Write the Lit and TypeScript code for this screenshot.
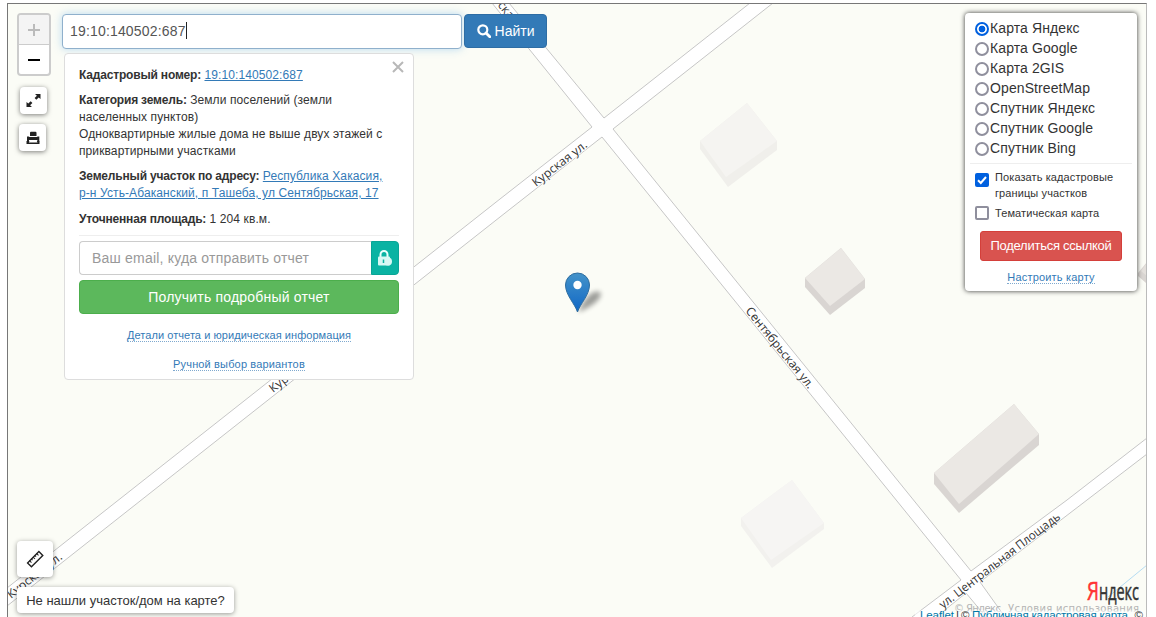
import { LitElement, html, svg, css } from "lit";
import { customElement, state } from "lit/decorators.js";

const LAYERS = [
  "Карта Яндекс",
  "Карта Google",
  "Карта 2GIS",
  "OpenStreetMap",
  "Спутник Яндекс",
  "Спутник Google",
  "Спутник Bing",
];

interface Building {
  outline: string;
  roof: string;
  wall: string;
  top: string;
}

const BUILDINGS: Building[] = [
  { outline: "700,141 747,103 777,141 777,150 728,187 700,149", roof: "700,141 747,103 777,141 726,177", wall: "#f0efeb", top: "#f5f4f1" },
  { outline: "805,278 841,248 865,279 865,288 830,315 805,287", roof: "805,278 841,248 865,279 830,306", wall: "#d9d5d2", top: "#ebe8e4" },
  { outline: "934,473 1014,404 1039,434 1039,445 959,513 934,484", roof: "934,473 1014,404 1039,434 959,504", wall: "#d9d5d2", top: "#ebe8e4" },
  { outline: "741,518 792,480 824,523 824,529 772,568 741,526", roof: "741,518 792,480 824,523 771,560", wall: "#f2f1ee", top: "#f6f5f3" },
  { outline: "1138,273 1147,262 1147,284 1138,276", roof: "1141,271 1147,263 1147,276", wall: "#d9d5d2", top: "#e4e0dc" },
];

@customElement("map-canvas")
export class MapCanvas extends LitElement {
  static styles = css`
    :host { display: block; }
    svg { display: block; }
    .edge { fill: none; stroke: #c6c6c6; stroke-width: 1; }
    .road { fill: #fff; }
    .street {
      font-family: "Open Sans", "Noto Sans", sans-serif;
      font-size: 12px;
      fill: #333;
      stroke: #fff;
      stroke-width: 2px;
      stroke-opacity: 0.7;
      paint-order: stroke;
    }
    .logo { font-family: "Open Sans", sans-serif; font-size: 23px; fill: #333; stroke: #333; stroke-width: 0.5px; }
    .logo-first { font-family: "Open Sans", sans-serif; font-size: 25px; fill: #f33; stroke: #f33; stroke-width: 0.5px; }
    .terms { font-family: "DejaVu Sans", sans-serif; font-size: 10px; fill: #b4b4b4; }
    .credit { font-family: "Liberation Sans", sans-serif; font-size: 11.5px; fill: #333; }
    .credit-link { fill: #0078a8; }
  `;

  private street(x: number, y: number, angle: number, length: number, text: string) {
    return svg`<text class="street" transform=${`translate(${x} ${y}) rotate(${angle})`}
      textLength=${length} lengthAdjust="spacingAndGlyphs">${text}</text>`;
  }

  render() {
    return html`
      <svg width="1138" height="613" viewBox="8 4 1138 613">
        <defs>
          <linearGradient id="pin" x1="0" y1="0" x2="0" y2="1">
            <stop offset="0" stop-color="#4493c9"></stop>
            <stop offset="1" stop-color="#1067c6"></stop>
          </linearGradient>
          <filter id="soft" x="-50%" y="-50%" width="200%" height="200%">
            <feGaussianBlur stdDeviation="2.5"></feGaussianBlur>
          </filter>
        </defs>
        <path class="road" d="M492 3 592 127 500 199 7 588V606L500 217 602 137 961 580 912 617H936L966 593 986 617H1005L980 582 1087 500 1147 454V438L1067 500 971 571 613 129 688 70 773 3H750L665 70 604 118 509 3Z"></path>
        <path class="edge" d="M492 3 592 127 500 199 7 588M7 606 500 217 602 137 961 580 912 617M936 617 966 593 986 617M1005 617 980 582 1087 500 1147 454M1147 438 1067 500 971 571 613 129 688 70 773 3M750 3 665 70 604 118 509 3"></path>
        <path d="M1108 597 1147 565" stroke="#b5dcf2" fill="none"></path>
        ${BUILDINGS.map(
          (b) => svg`<polygon points=${b.outline} fill=${b.wall}></polygon><polygon points=${b.roof} fill=${b.top}></polygon>`
        )}
        ${this.street(536, 187, -38, 66, "Курская ул.")}
        ${this.street(273, 393, -38, 66, "Курская ул.")}
        ${this.street(11, 599, -38, 66, "Курская ул.")}
        ${this.street(484, -11, 51, 66, "Курская ул.")}
        ${this.street(745, 311, 51, 101, "Сентябрьская ул.")}
        ${this.street(943, 609, -37.5, 149, "ул. Центральная Площадь")}
        <path d="M578 312C584 299 592 289 600 292C604 297 592 307 578 312Z" fill="#000" opacity=".38" filter="url(#soft)"></path>
        <path d="M577.5 312C575 304 565.5 295 565.5 285A12 12 0 0 1 589.500 285C589.500 295 580 304 577.500 312Z" fill="url(#pin)" stroke="#2e6d9f" stroke-width="1"></path>
        <circle cx="577.500" cy="285" r="4.200" fill="#fff"></circle>
        <text class="logo-first" x="1087" y="600" textLength="12" lengthAdjust="spacingAndGlyphs">Я</text>
        <text class="logo" x="1099" y="600" textLength="40" lengthAdjust="spacingAndGlyphs">ндекс</text>
        <text class="terms" x="954" y="612" textLength="47">© Яндекс</text>
        <text class="terms" x="1008" y="612" textLength="131">Условия использования</text>
        <rect x="915" y="610.500" width="231" height="7" fill="#fff" opacity=".6"></rect>
        <text class="credit credit-link" x="920" y="619" textLength="34">Leaflet</text>
        <text class="credit" x="956" y="619">|</text>
        <text class="credit" x="961" y="619">©</text>
        <text class="credit credit-link" x="972" y="619" textLength="156">Публичная кадастровая карта</text>
        <text class="credit" x="1128" y="619">, ©</text>
      </svg>
    `;
  }
}

@customElement("parcel-card")
export class ParcelCard extends LitElement {
  static styles = css`
    :host {
      display: block;
      box-sizing: border-box;
      width: 350px;
      height: 327px;
      padding: 13px 14px 0;
      background: #fff;
      border: 1px solid #ddd;
      border-radius: 4px;
      font: 12px/17px "Liberation Sans", Arial, sans-serif;
      letter-spacing: 0.1px;
      color: #333;
      position: relative;
    }
    .row { margin: 0 0 8px; white-space: nowrap; }
    .area { margin: 9px 0 7px; }
    b { letter-spacing: -0.18px; }
    a { color: #337ab7; text-decoration: underline; }
    .close { position: absolute; right: 9px; top: 7px; }
    .divider { height: 1px; background: #eee; margin-bottom: 5px; }
    .field { display: flex; height: 34px; box-sizing: border-box; }
    .email {
      flex: 1;
      border: 1px solid #ccc;
      border-right: 0;
      border-radius: 4px 0 0 4px;
      padding: 0 12px;
      font-size: 14px;
      line-height: 32px;
      letter-spacing: 0.2px;
      color: #999;
    }
    .lock {
      width: 28px;
      background: #0ab3a3;
      border-radius: 0 4px 4px 0;
      display: flex;
      align-items: center;
      justify-content: center;
      box-sizing: border-box;
      border: 1px solid #0aa596;
    }
    .submit {
      display: block;
      width: 100%;
      height: 34px;
      margin-top: 5px;
      background: #5cb85c;
      border: 1px solid #4cae4c;
      border-radius: 4px;
      color: #fff;
      font: 14px/20px "Liberation Sans", Arial, sans-serif;
      letter-spacing: 0.2px;
      padding: 0;
    }
    .more { text-align: center; font-size: 11px; line-height: 13px; margin-top: 16px; letter-spacing: 0.06px; }
    .more.first { margin-top: 15px; }
    .more.last { letter-spacing: 0.15px; }
    .dotted { text-decoration: none; border-bottom: 1px dotted #7fa9cf; }
  `;

  render() {
    return html`
      <svg class="close" width="12" height="12" viewBox="0 0 12 12">
        <path d="M1 1 11 11M11 1 1 11" stroke="#b8b8b8" stroke-width="2"></path>
      </svg>
      <div class="row"><b>Кадастровый номер:</b> <a>19:10:140502:687</a></div>
      <div class="row">
        <b>Категория земель:</b> Земли поселений (земли<br />населенных пунктов)<br />Одноквартирные жилые дома не выше двух этажей
        с<br />приквартирными участками
      </div>
      <div class="row">
        <b>Земельный участок по адресу:</b> <a>Республика Хакасия,<br />р-н Усть-Абаканский, п Ташеба, ул Сентябрьская, 17</a>
      </div>
      <div class="row area"><b>Уточненная площадь:</b> 1 204 кв.м.</div>
      <div class="divider"></div>
      <div class="field">
        <div class="email">Ваш email, куда отправить отчет</div>
        <div class="lock">
          <svg width="16" height="18" viewBox="0 0 16 18">
            <path d="M3.500 8V5.500a3.500 3.500 0 0 1 7 0V8" fill="none" stroke="#eafffc" stroke-width="2"></path>
            <rect x="1" y="7.500" width="12" height="9" rx="1" fill="#d8f8f4"></rect>
            <circle cx="11" cy="12.500" r="4" fill="#d8f8f4"></circle>
            <path d="M6.500 10.500v3.500" stroke="#0ab3a3" stroke-width="1.500"></path>
          </svg>
        </div>
      </div>
      <button class="submit">Получить подробный отчет</button>
      <div class="more first"><a class="dotted">Детали отчета и юридическая информация</a></div>
      <div class="more last"><a class="dotted">Ручной выбор вариантов</a></div>
    `;
  }
}

@customElement("layer-panel")
export class LayerPanel extends LitElement {
  @state() private selected = 0;

  static styles = css`
    :host {
      display: block;
      box-sizing: border-box;
      width: 172px;
      height: 278px;
      padding: 5px 5px 0;
      background: #fff;
      border-radius: 4px;
      box-shadow: 0 0 5px rgba(0, 0, 0, 0.8);
      font: 14px/20px "Liberation Sans", Arial, sans-serif;
      letter-spacing: 0.1px;
      color: #333;
    }
    .option { display: flex; align-items: center; height: 20px; padding-left: 5px; gap: 1px; white-space: nowrap; }
    .radio {
      box-sizing: border-box;
      width: 14px;
      height: 14px;
      border: 2px solid #8f8f9d;
      border-radius: 50%;
      margin-top: 2px;
    }
    .radio.on { border-color: #0060df; background: radial-gradient(circle, #0060df 3px, #fff 3.700px); }
    .divider { height: 1px; background: #eee; margin: 5px 0; }
    .check { display: flex; align-items: flex-start; gap: 6px; padding-left: 5px; font-size: 11px; line-height: 16px; white-space: nowrap; }
    .box {
      box-sizing: border-box;
      width: 14px;
      height: 14px;
      border: 2px solid #8f8f9d;
      border-radius: 2px;
      flex: none;
      margin-top: 1px;
    }
    .box.on { border: 0; background: #0060df; margin-top: 4px; }
    .box svg { display: block; }
    .check + .check { margin-top: 4px; }
    .share {
      display: block;
      width: 142px;
      height: 30px;
      margin: 10px auto;
      border: 1px solid #d43f3a;
      border-radius: 3px;
      background: #d9534f;
      color: #fff;
      font: 13px/20px "Liberation Sans", Arial, sans-serif;
      letter-spacing: -0.25px;
      padding: 0;
    }
    .setup { text-align: center; font-size: 11px; line-height: 13px; letter-spacing: 0.2px; }
    .setup a { color: #337ab7; border-bottom: 1px dotted #7fa9cf; }
  `;

  render() {
    return html`
      ${LAYERS.map(
        (name, i) => html`<div class="option" @click=${() => (this.selected = i)}>
          <span class=${i === this.selected ? "radio on" : "radio"}></span><span>${name}</span>
        </div>`
      )}
      <div class="divider"></div>
      <div class="check">
        <span class="box on"
          ><svg width="14" height="14" viewBox="0 0 14 14">
            <path d="M3 7.300 5.800 10 11 4" fill="none" stroke="#fff" stroke-width="2"></path></svg
        ></span>
        <span>Показать кадастровые<br />границы участков</span>
      </div>
      <div class="check"><span class="box"></span><span>Тематическая карта</span></div>
      <button class="share">Поделиться ссылкой</button>
      <div class="setup"><a>Настроить карту</a></div>
    `;
  }
}

@customElement("app-root")
export class AppRoot extends LitElement {
  static styles = css`
    :host {
      display: block;
      box-sizing: border-box;
      width: 1156px;
      height: 617px;
      padding: 3px 9px 0 7px;
      background: #fff;
      overflow: hidden;
      font-family: "Liberation Sans", Arial, sans-serif;
      color: #333;
    }
    .map {
      box-sizing: border-box;
      position: relative;
      height: 614px;
      border: 1px solid #777;
      border-right-color: #bbb;
      border-bottom: 0;
      background: #fbfcf6;
      overflow: hidden;
    }
    .tools { position: absolute; left: 9px; top: 9px; display: flex; flex-direction: column; align-items: flex-start; }
    .zoom { width: 30px; border: 2px solid #ccc; border-radius: 4px; background: #fff; overflow: hidden; }
    .zoom-in, .zoom-out { height: 29px; display: flex; align-items: center; justify-content: center; }
    .zoom-in { background: #f4f4f4; border-bottom: 1px solid #ccc; }
    .tool {
      display: flex;
      align-items: center;
      justify-content: center;
      width: 27px;
      height: 27px;
      border-radius: 4px;
      background: #fff;
      box-shadow: 0 1px 5px rgba(0, 0, 0, 0.5);
    }
    .full { margin: 11px 0 0 3px; }
    .print { margin: 10px 0 0 2px; }
    .search { position: absolute; left: 54px; top: 10px; display: flex; gap: 2px; }
    .query {
      box-sizing: border-box;
      width: 400px;
      height: 35px;
      border: 1px solid #8fb0cc;
      border-radius: 4px;
      background: #fff;
      box-shadow: 0 0 8px rgba(102, 175, 233, 0.45);
      padding: 0 7px 2px;
      font-size: 14px;
      letter-spacing: 0.17px;
      color: #555;
      display: flex;
      align-items: center;
    }
    .caret { width: 1px; height: 17px; background: #222; }
    .find {
      box-sizing: border-box;
      display: flex;
      align-items: center;
      justify-content: center;
      gap: 4px;
      width: 83px;
      height: 34px;
      border: 1px solid #2e6da4;
      border-radius: 4px;
      background: #337ab7;
      color: #fff;
      font-size: 14px;
    }
    .card { position: absolute; left: 56px; top: 49px; }
    .layers { position: absolute; left: 957px; top: 9px; }
    .ruler { position: absolute; left: 9px; top: 537px; width: 36px; height: 36px; box-shadow: 0 1px 5px rgba(0, 0, 0, 0.4); }
    .missing {
      position: absolute;
      left: 9px;
      top: 583px;
      box-sizing: border-box;
      width: 217px;
      height: 26px;
      border-radius: 4px;
      background: #fff;
      box-shadow: 0 1px 5px rgba(0, 0, 0, 0.4);
      font-size: 13px;
      line-height: 28px;
      text-align: center;
      white-space: nowrap;
    }
  `;

  render() {
    return html`
      <div class="map">
        <map-canvas></map-canvas>

        <div class="tools">
          <div class="zoom">
            <div class="zoom-in">
              <svg width="14" height="14" viewBox="0 0 14 14"><path d="M7 1V13M1 7H13" stroke="#bbb" stroke-width="2"></path></svg>
            </div>
            <div class="zoom-out">
              <svg width="14" height="14" viewBox="0 0 14 14"><path d="M1 7H13" stroke="#000" stroke-width="2"></path></svg>
            </div>
          </div>
          <div class="tool full">
            <svg width="15" height="15" viewBox="0 0 15 15">
              <path d="M9 1H14.500V6L12.700 4.600 10.300 6.800 8.600 5.100 10.900 2.800Z" fill="#222"></path>
              <path d="M6 14H.5V9L2.300 10.400 4.700 8.200 6.400 9.900 4.100 12.200Z" fill="#222"></path>
            </svg>
          </div>
          <div class="tool print">
            <svg width="14" height="14" viewBox="0 0 14 14">
              <path d="M4 5V2Q4 .8 5 .8H9.500Q10.500 .8 10.500 2V5Z" fill="#222"></path>
              <path d="M1 10.500V5.500H2.800L4 6.500H10.500L11.500 5.500H13.300V10.500H11.300V8.700H3V10.500Z" fill="#222"></path>
              <path d="M3 6H11.500V9H3Z" fill="#222"></path>
              <path d="M.5 10H3.500L2.800 11.500H11.500L10.800 10H13.500V13H.5Z" fill="#222"></path>
            </svg>
          </div>
        </div>

        <div class="search">
          <div class="query"><span>19:10:140502:687</span><span class="caret"></span></div>
          <div class="find">
            <svg width="14" height="14" viewBox="0 0 14 14">
              <circle cx="5.800" cy="5.800" r="4.500" fill="none" stroke="#fff" stroke-width="2.200"></circle>
              <path d="M9 9 12.800 12.800" stroke="#fff" stroke-width="2.800" stroke-linecap="round"></path>
            </svg>
            <span>Найти</span>
          </div>
        </div>

        <parcel-card class="card"></parcel-card>
        <layer-panel class="layers"></layer-panel>

        <div class="tool ruler">
          <svg width="18" height="18" viewBox="0 0 18 18">
            <g transform="rotate(-45 9 9)" fill="none" stroke="#222">
              <rect x="1" y="6.500" width="16" height="5.500" stroke-width="1.400"></rect>
              <path d="M4 6V9M6.500 6V8M9 6V9M11.500 6V8M14 6V9"></path>
            </g>
          </svg>
        </div>
        <div class="missing">Не нашли участок/дом на карте?</div>
      </div>
    `;
  }
}
